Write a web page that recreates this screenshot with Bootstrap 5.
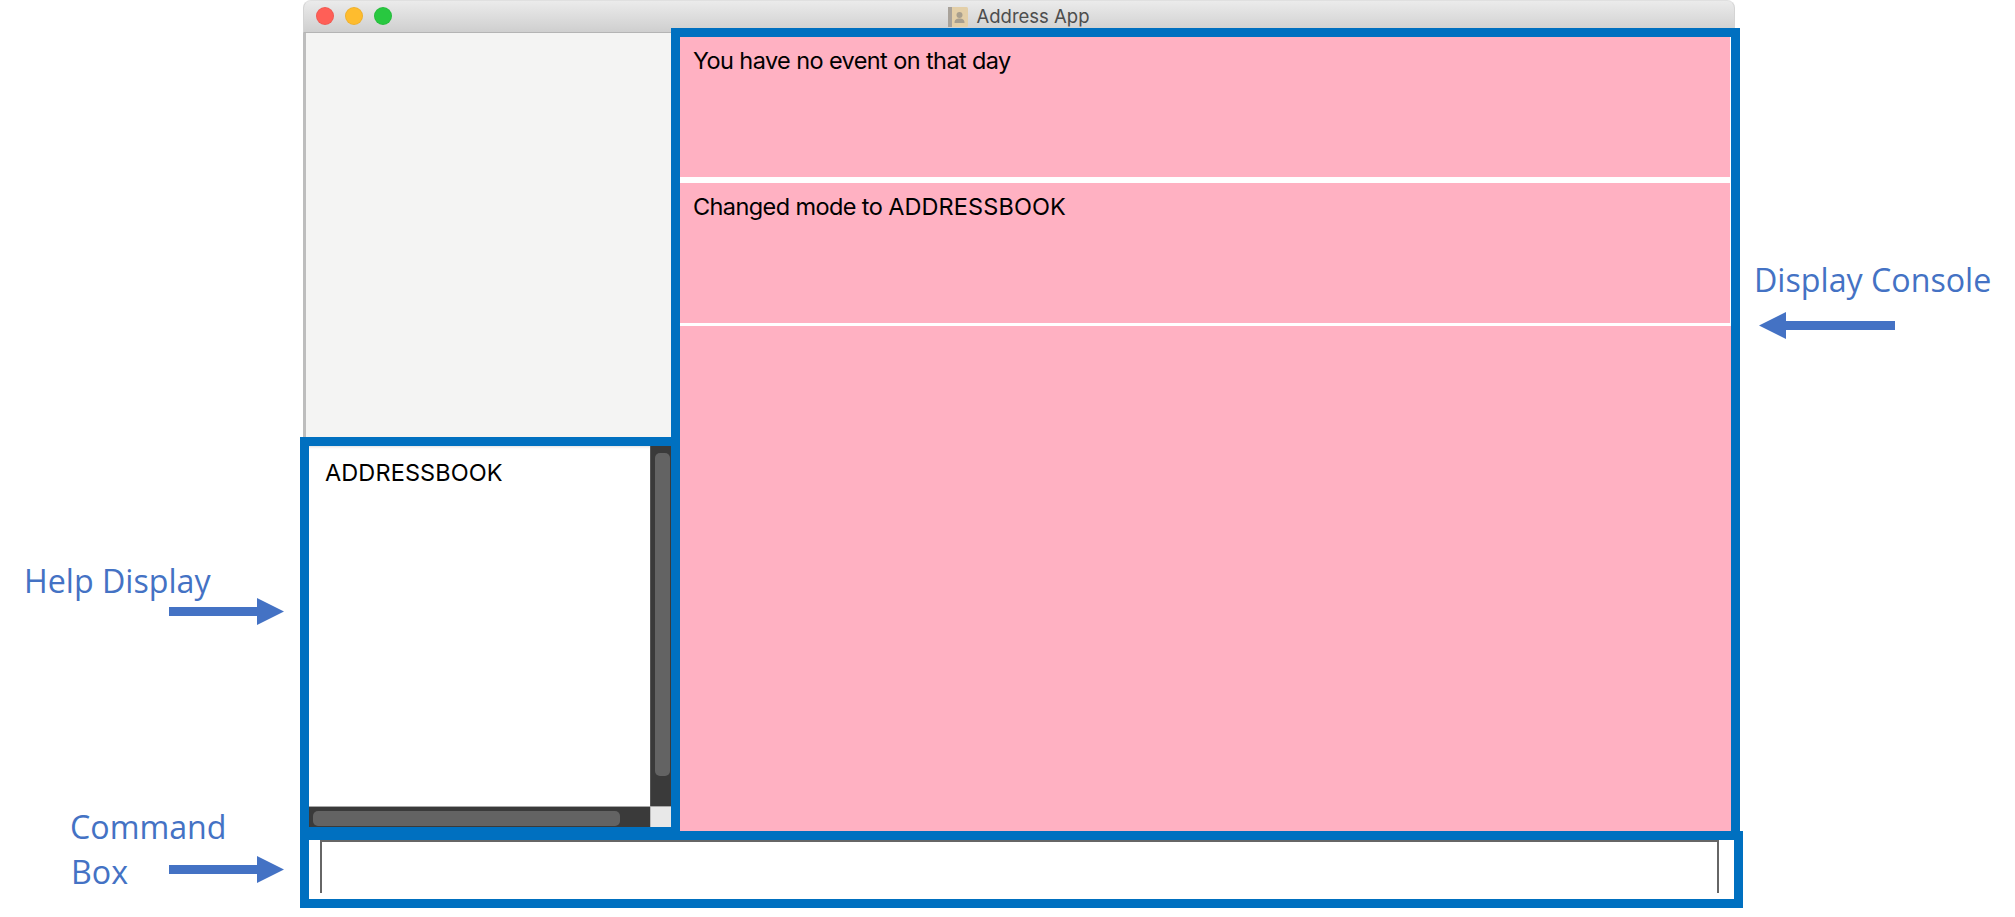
<!DOCTYPE html>
<html lang="en">
<head>
<meta charset="utf-8">
<title>Address App</title>
<link href="https://cdn.jsdelivr.net/npm/bootstrap@5.3.0/dist/css/bootstrap.min.css" rel="stylesheet">
<style>
html,body{height:917px;overflow:hidden;background:#fff}
.stage{position:relative;width:2015px;height:917px;padding-left:300px}
.stage-inner{width:1443px}
.titlebar{margin-left:3px;width:1432px;height:33px;background:linear-gradient(#ebebeb,#cfcfcf);border-top:1px solid #e0e0e0;border-left:1px solid #d4d4d4;border-right:1px solid #d4d4d4;border-bottom:1px solid #b4b4b4;border-radius:8px 8px 0 0;font-family:Inter,sans-serif;font-size:18.5px;color:#4d4d4d}
.lights{left:12px;top:6px;gap:11px}
.light{width:18px;height:18px;border-radius:50%;border:1px solid rgba(0,0,0,.06)}
.l-red{background:#ff5f57}.l-amber{background:#febc2e}.l-green{background:#28c840}
.title-group{padding-top:1px;gap:8px}
.main-row{margin-top:-5px;position:relative}
.left-col{width:371px;padding-top:5px}
.blank-pane{height:404px;margin-left:3px;background:#f4f4f3;border-left:3px solid #bdbdbd}
.help-box{height:394px;border:solid #0070c0;border-width:9px 0 4px 9px;background:#fff}
.help-view{flex:1 1 auto;min-height:0}
.help-text{flex:1 1 auto;padding:13px 16px;box-shadow:inset 0 4px 3px -3px #ddd}
.app-text{font-family:Inter,sans-serif;font-size:23.5px;line-height:28px;color:#000}
.sp-a{letter-spacing:-.6px}
.sp-c{letter-spacing:.1px}
.vbar{width:21px;background:#3a3a3a;padding:7px 2px 30px 4px;border-left:1px solid #555}
.vthumb{width:15px;height:100%;background:#636363;border-radius:5px}
.hrow{height:21px;border-top:1px solid #a8a8a8}
.hbar{flex:1 1 auto;background:#3a3a3a;padding:4px 30px 1px 4px}
.hthumb{width:307px;height:15px;background:#636363;border-radius:5px}
.corner{width:21px;background:#e8e8e8;border-left:1px solid #bbb}
.console{width:1069px;height:803px;border:solid #0070c0;border-width:9px 9px 0 9px;background:#ffb1c2}
.msg{height:146px;padding:10px 13px;border-right:1px solid #fff;border-bottom:6px solid #fff;background:#ffb1c2}
.msg-b{height:143px;border-bottom-width:3px}
.cmd-box{position:relative;width:1443px;height:77px;border:9px solid #0070c0;background:#fff;padding:0 15px 6px 11px}
.cmd-input{height:53px;padding:0;border:solid #666;border-width:2px 2px 0 2px;border-radius:0;background:#fff;box-shadow:none}
.note{position:absolute;font-family:"Open Sans",sans-serif;font-size:32.2px;line-height:45px;color:#4472c4;white-space:nowrap}
.n-console{left:1754px;top:257px}
.n-help{left:24px;top:558px}
.n-cmd{left:70px;top:804px}
.n-box{left:71px;top:849px}
.arrow{position:absolute;display:block}
.a-console{left:1759px;top:312px}
.a-help{left:169px;top:598px}
.a-cmd{left:169px;top:856px}
</style>
</head>
<body>
<div class="stage">
  <div class="stage-inner">
    <div class="titlebar position-relative d-flex align-items-center justify-content-center">
      <div class="lights position-absolute d-flex align-items-center">
        <span class="light l-red"></span><span class="light l-amber"></span><span class="light l-green"></span>
      </div>
      <div class="title-group d-flex align-items-center">
        <svg width="20" height="20" viewBox="0 0 20 20" aria-hidden="true">
          <rect x="0" y="0" width="20" height="20" rx="1.5" fill="#e3cfa8"/>
          <rect x="0" y="0" width="4" height="20" fill="#a8a29a"/>
          <circle cx="11.5" cy="8" r="3" fill="#a89f8e"/>
          <path d="M6.5 16c0-3.2 2-4.4 5-4.4s5 1.2 5 4.4z" fill="#a89f8e"/>
        </svg>
        <span>Address App</span>
      </div>
    </div>
    <div class="main-row d-flex align-items-start">
      <div class="left-col d-flex flex-column">
        <div class="blank-pane"></div>
        <div class="help-box d-flex flex-column">
          <div class="help-view d-flex">
            <div class="help-text app-text sp-c">ADDRESSBOOK</div>
            <div class="vbar"><div class="vthumb"></div></div>
          </div>
          <div class="hrow d-flex">
            <div class="hbar"><div class="hthumb"></div></div>
            <div class="corner"></div>
          </div>
        </div>
      </div>
      <div class="console d-flex flex-column">
        <div class="msg app-text sp-a">You have no event on that day</div>
        <div class="msg msg-b app-text sp-c"><span class="sp-a">Changed mode to </span>ADDRESSBOOK</div>
      </div>
    </div>
    <div class="cmd-box">
      <input class="form-control cmd-input" type="text" aria-label="Command">
    </div>
  </div>

  <div class="note n-console">Display Console</div>
  <svg class="arrow a-console" width="136" height="27" viewBox="0 0 136 27" aria-hidden="true"><path d="M0 13.5 27 0V9H136V18H27V27Z" fill="#4472c4"/></svg>
  <div class="note n-help">Help Display</div>
  <svg class="arrow a-help" width="115" height="27" viewBox="0 0 115 27" aria-hidden="true"><path d="M115 13.5 88 0V9H0V18H88V27Z" fill="#4472c4"/></svg>
  <div class="note n-cmd">Command</div>
  <div class="note n-box">Box</div>
  <svg class="arrow a-cmd" width="115" height="27" viewBox="0 0 115 27" aria-hidden="true"><path d="M115 13.5 88 0V9H0V18H88V27Z" fill="#4472c4"/></svg>
</div>
<script src="https://cdn.jsdelivr.net/npm/bootstrap@5.3.0/dist/js/bootstrap.bundle.min.js"></script>
</body>
</html>
